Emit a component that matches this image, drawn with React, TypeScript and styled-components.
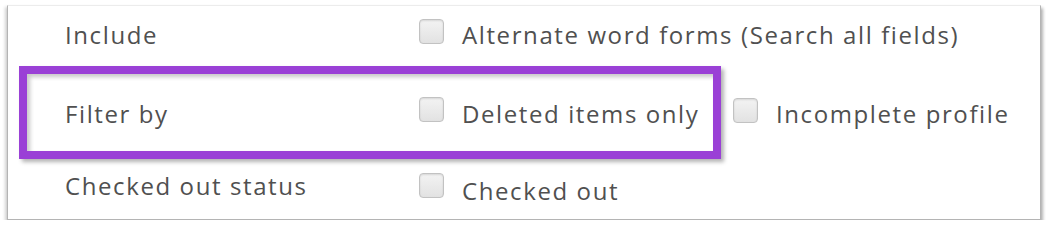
import React from "react";
import styled, { createGlobalStyle } from "styled-components";

const GlobalStyle = createGlobalStyle`
  html, body { margin: 0; padding: 0; background: #ffffff; }
  body { font-family: "Open Sans", "Liberation Sans", sans-serif; }
`;

const Panel = styled.div`
  box-sizing: border-box;
  margin: 5px 0 0 7px;
  width: 1034px;
  height: 215px;
  background: #ffffff;
  border: 1px solid #b4b4b4;
  border-top-color: #ececec;
  box-shadow: 2px 3px 3px rgba(0, 0, 0, 0.3), -2px 2px 3px rgba(0, 0, 0, 0.18);
  display: flex;
  flex-direction: column;
`;

const Row = styled.div<{ $padTop: number }>`
  box-sizing: border-box;
  height: 60px;
  display: flex;
  align-items: flex-start;
  padding: ${(p) => p.$padTop}px 0 0 57px;
`;

const HighlightRow = styled.div`
  display: flex;
  align-items: flex-start;
  height: 93px;
  padding-left: 11px;
`;

const Highlight = styled.div`
  box-sizing: border-box;
  width: 702px;
  height: 93px;
  border: 8px solid #9a40d6;
  padding: 25px 0 0 38px;
  display: flex;
  align-items: flex-start;
  box-shadow: 3px 3px 4px rgba(0, 0, 0, 0.3), inset 3px 3px 4px rgba(0, 0, 0, 0.22);
`;

const textStyle = `
  font-size: 24px;
  letter-spacing: 1.6px;
  line-height: 30px;
  color: #505050;
`;

const Label = styled.div`
  width: 354px;
  flex: none;
  ${textStyle}
`;

const Option = styled.label<{ $shift?: number; $boxShift?: number; $left?: number }>`
  display: flex;
  align-items: flex-start;
  gap: 18px;
  margin-top: ${(p) => p.$shift ?? 0}px;
  margin-left: ${(p) => p.$left ?? 0}px;
  ${textStyle}
  white-space: nowrap;

  & > span:first-child {
    margin-top: ${(p) => p.$boxShift ?? -1}px;
  }
`;

const Box = styled.span`
  box-sizing: border-box;
  width: 25px;
  height: 25px;
  flex: none;
  border: 1.5px solid #c2c2c2;
  border-radius: 4px;
  background: linear-gradient(#f3f3f3, #e2e2e2);
  box-shadow: inset 0 1px 2px rgba(0, 0, 0, 0.12);
`;

export default function App() {
  return (
    <>
      <GlobalStyle />
      <Panel>
        <Row $padTop={14}>
          <Label>Include</Label>
          <Option>
            <Box />
            <span>Alternate word forms (Search all fields)</span>
          </Option>
        </Row>
        <HighlightRow>
          <Highlight>
            <Label>Filter by</Label>
            <Option $boxShift={-2}>
              <Box />
              <span>Deleted items only</span>
            </Option>
          </Highlight>
          <Option $shift={33} $left={12} $boxShift={-1}>
            <Box />
            <span>Incomplete profile</span>
          </Option>
        </HighlightRow>
        <Row $padTop={12}>
          <Label>Checked out status</Label>
          <Option $shift={5} $boxShift={-3}>
            <Box />
            <span>Checked out</span>
          </Option>
        </Row>
      </Panel>
    </>
  );
}
